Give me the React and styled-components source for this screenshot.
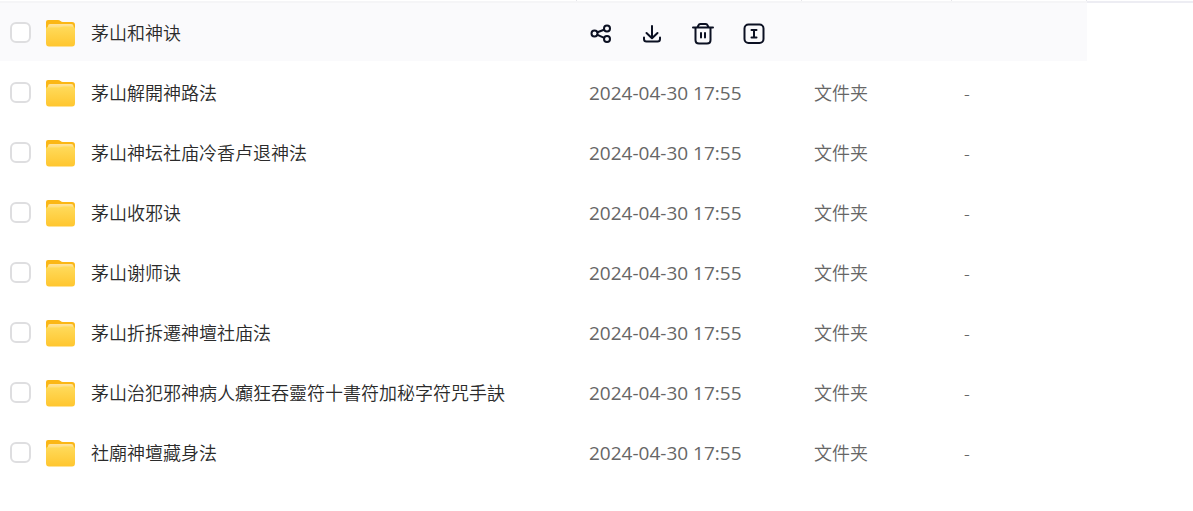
import React from "react";
import styled, { createGlobalStyle } from "styled-components";

const Global = createGlobalStyle`
  *, *::before { box-sizing: border-box; }
  body {
    margin: 0;
    background: #fff;
    color: #333;
    font: 18px/24px "Noto Sans", "Noto Sans CJK SC", sans-serif;
  }
`;

const Page = styled.main`
  min-height: 100vh;
  background: linear-gradient(#ededf3, #ededf3) 0 1px / 100% 2px no-repeat;
`;

const Table = styled.table`
  width: calc(100% - 106px);
  table-layout: fixed;
  border-collapse: separate;
  border-spacing: 0;
`;

const HeadCell = styled.th`
  height: 3px;
  padding: 0;
  width: ${(p) => p.$width};
  border-bottom: 2px solid #f5f5f7;
  background: linear-gradient(#e6e6ea, #e6e6ea) right / 1px 100% no-repeat;
`;

const Row = styled.tr`
  background: ${(p) => (p.$active ? "#fafafc" : "#fff")};
`;

const Cell = styled.td`
  height: ${(p) => (p.$first ? "58px" : "60px")};
  padding: ${(p) => (p.$first ? "2px" : "4px")} 12px 0;
  color: #666;
  font-weight: 350;
  white-space: nowrap;
`;

const NameCell = styled(Cell)`
  padding-left: 10px;
  color: #2b2b2b;
`;

const NameLabel = styled.label`
  display: flex;
  align-items: center;
`;

const Check = styled.input`
  appearance: none;
  width: 21px;
  height: 21px;
  margin: 0 14px 2px 0;
  border: 2px solid #dedee0;
  border-radius: 6px;
  background: #fff;
`;

const FolderSvg = styled.svg`
  width: 31px;
  height: 28px;
  margin-right: 15px;
`;

const DateText = styled.time`
  display: block;
  font-family: "Open Sans", "Noto Sans", sans-serif;
  font-size: 19px;
  font-weight: 400;
`;

const Actions = styled.div`
  display: flex;
  gap: 27px;
`;

const IconButton = styled.button`
  display: flex;
  width: 24px;
  height: 24px;
  padding: 0;
  border: 0;
  background: none;
  color: #0b1022;
`;

const Stroke = ({ children }) => (
  <svg width="24" height="24" viewBox="0 0 24 24" fill="none" stroke="currentColor" strokeWidth="2" strokeLinecap="round" strokeLinejoin="round" aria-hidden="true">
    {children}
  </svg>
);

const Folder = () => (
  <FolderSvg viewBox="0 0 31 28" aria-hidden="true">
    <defs>
      <linearGradient id="front" x1="0" y1="0" x2="0" y2="1">
        <stop offset="0" stopColor="#ffdb5c" />
        <stop offset="1" stopColor="#ffc62f" />
      </linearGradient>
      <linearGradient id="paper" x1="0" y1="0" x2="0" y2="1">
        <stop offset="0" stopColor="#ffe3a0" />
        <stop offset="1" stopColor="#ffdf78" />
      </linearGradient>
    </defs>
    <path d="M1 3Q1 1 3 1H13Q14.500 1 15.500 2T18 3H27Q30 3 30 6V16H1Z" fill="#fbb716" />
    <path d="M1 10Q1 8 3 7.500L4 7H27L28 7.500Q30 8 30 10V24Q30 27.500 27 27.500H4Q1 27.500 1 24Z" fill="url(#front)" />
    <path d="M3 8.500V7Q3 5 5 5H26Q28.500 5 28.500 7V8.500Q27 7.500 25 7.500H19Q17 7.500 16 8T13 8.500H5Q4 8.500 3 8.500Z" fill="url(#paper)" />
  </FolderSvg>
);

const actions = [
  ["分享", <><circle cx="5.500" cy="12.500" r="3" /><circle cx="18" cy="7.500" r="3" /><circle cx="18" cy="18" r="3" /><path d="M8.500 11.200L15 8.800M8.500 13.900L15.200 16.800" /></>],
  ["下载", <><path d="M12 5V17M6.500 12L12 17.300L17.500 12M4 16.500V18Q4 20.500 6.500 20.500H17.500Q20 20.500 20 18V16.500" /></>],
  ["删除", <><path d="M2 6.500H22M6.500 6L8 3.500Q8.500 3 9.500 3H14.500Q15.500 3 16 3.500L17.500 6M4.500 7V19Q4.500 22.500 8 22.500H16Q19.500 22.500 19.500 19V7M10 12V16.500M14 12V16.500" /></>],
  ["重命名", <><rect x="2.500" y="3.500" width="19" height="18.500" rx="4" /><path d="M9.500 9H14.500M12 9V16.500M9.500 16.500H14.500" /></>],
];

const files = [
  "茅山和神诀",
  "茅山解開神路法",
  "茅山神坛社庙冷香卢退神法",
  "茅山收邪诀",
  "茅山谢师诀",
  "茅山折拆遷神壇社庙法",
  "茅山治犯邪神病人癲狂吞靈符十書符加秘字符咒手訣",
  "社廟神壇藏身法",
];

export default function App() {
  return (
    <Page>
      <Global />
      <Table>
        <thead>
          <tr>
            <HeadCell $width="auto" aria-label="文件名" />
            <HeadCell $width="225px" aria-label="修改时间" />
            <HeadCell $width="150px" aria-label="类型" />
            <HeadCell $width="135px" aria-label="大小" />
          </tr>
        </thead>
        <tbody>
          {files.map((name, i) => (
            <Row key={name} $active={i === 0}>
              <NameCell $first={i === 0}>
                <NameLabel>
                  <Check type="checkbox" />
                  <Folder />
                  {name}
                </NameLabel>
              </NameCell>
              {i === 0 ? (
                <Cell colSpan={3} $first>
                  <Actions>
                    {actions.map(([label, art]) => (
                      <IconButton key={label} type="button" aria-label={label}>
                        <Stroke>{art}</Stroke>
                      </IconButton>
                    ))}
                  </Actions>
                </Cell>
              ) : (
                <>
                  <Cell><DateText dateTime="2024-04-30T17:55">2024-04-30 17:55</DateText></Cell>
                  <Cell>文件夹</Cell>
                  <Cell>-</Cell>
                </>
              )}
            </Row>
          ))}
        </tbody>
      </Table>
    </Page>
  );
}
